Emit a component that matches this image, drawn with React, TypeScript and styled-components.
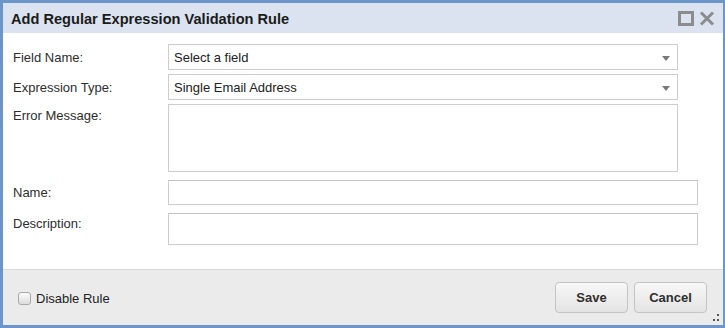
import styled, { createGlobalStyle } from 'styled-components';

const GlobalStyle = createGlobalStyle`
    html, body {
        margin: 0;
        padding: 0;
        background: #ffffff;
    }
    body {
        font-family: Arial, "Liberation Sans", sans-serif;
    }
`;

const Dialog = styled.div`
    width: 725px;
    height: 328px;
    box-sizing: border-box;
    border-style: solid;
    border-color: #6c95c9;
    border-width: 3px 2px 3px 3px;
    display: flex;
    flex-direction: column;
    background: #ffffff;
    position: relative;
`;

const TitleBar = styled.div`
    height: 30px;
    flex: none;
    display: flex;
    align-items: center;
    justify-content: space-between;
    background: #dae3ef;
    padding: 0 8px 0 8px;
`;

const Title = styled.h1`
    margin: 0;
    font-size: 14.6px;
    font-weight: bold;
    color: #1b1b1b;
    padding-top: 1px;
`;

const TitleIcons = styled.div`
    display: flex;
    align-items: center;
    gap: 5px;
    padding-top: 1px;
`;

const Body = styled.div`
    flex: 1;
    display: grid;
    grid-template-columns: 155px 1fr;
    row-gap: 4px;
    align-content: start;
    padding: 11px 0 0 10px;
`;

const Label = styled.label<{ $top?: number; $mt?: number }>`
    font-size: 13px;
    color: #2d2d2d;
    display: flex;
    align-items: ${({ $top }) => ($top !== undefined ? 'flex-start' : 'center')};
    padding-top: ${({ $top }) => $top ?? 0}px;
    margin-top: ${({ $mt }) => $mt ?? 0}px;
`;

const SelectBox = styled.div`
    width: 510px;
    height: 26px;
    box-sizing: border-box;
    border: 1px solid #cdcdcd;
    display: flex;
    align-items: center;
    justify-content: space-between;
    padding: 0 7px 0 5px;
    font-size: 13px;
    color: #222;
    background: #fff;
`;

const Arrow = styled.span`
    width: 0;
    height: 0;
    border-left: 4.5px solid transparent;
    border-right: 4.5px solid transparent;
    border-top: 5px solid #7a7a7a;
    margin-top: 2px;
`;

const TextArea = styled.div`
    width: 510px;
    height: 68px;
    box-sizing: border-box;
    border: 1px solid #cdcdcd;
    margin-bottom: 4px;
`;

const Input = styled.div<{ $h: number; $mt?: number }>`
    width: 530px;
    height: ${({ $h }) => $h}px;
    box-sizing: border-box;
    border: 1px solid #cdcdcd;
    border-top-color: #c2c2c2;
    margin-top: ${({ $mt }) => $mt ?? 0}px;
`;

const Footer = styled.div`
    height: 56px;
    flex: none;
    box-sizing: border-box;
    border-top: 1px solid #d9d9d9;
    background: #ebebeb;
    display: flex;
    align-items: center;
    justify-content: space-between;
    padding: 1px 16px 0 15px;
`;

const CheckRow = styled.label`
    display: flex;
    align-items: center;
    gap: 5px;
    font-size: 13px;
    color: #222;
`;

const CheckBox = styled.span`
    width: 11px;
    height: 11px;
    border: 1px solid #a9a9a9;
    border-radius: 3px;
    background: linear-gradient(#fbfbfb, #dcdcdc);
`;

const Buttons = styled.div`
    display: flex;
    gap: 6px;
    margin-top: -2px;
`;

const Button = styled.button`
    width: 73px;
    height: 31px;
    border: 1px solid #c4c4c4;
    border-radius: 4px;
    background: linear-gradient(#f7f7f7, #e4e4e4);
    font-family: Arial, "Liberation Sans", sans-serif;
    font-size: 13px;
    font-weight: bold;
    color: #2e2e2e;
    padding: 0;
`;

const Grip = styled.svg`
    position: absolute;
    right: 3px;
    bottom: 3px;
`;

const MaxIcon = () => (
    <svg width="16" height="15" viewBox="0 0 16 15">
        <rect x="1.5" y="1.5" width="13" height="12" fill="none" stroke="#8c8c8c" strokeWidth="3" />
    </svg>
);

const CloseIcon = () => (
    <svg width="16" height="15" viewBox="0 0 16 15">
        <path d="M2 1.5 L14 13.5 M14 1.5 L2 13.5" stroke="#8c8c8c" strokeWidth="3" />
    </svg>
);

export default function App() {
    return (
        <>
            <GlobalStyle />
            <Dialog>
                <TitleBar>
                    <Title>Add Regular Expression Validation Rule</Title>
                    <TitleIcons>
                        <MaxIcon />
                        <CloseIcon />
                    </TitleIcons>
                </TitleBar>
                <Body>
                    <Label>Field Name:</Label>
                    <SelectBox>
                        Select a field
                        <Arrow />
                    </SelectBox>
                    <Label>Expression Type:</Label>
                    <SelectBox>
                        Single Email Address
                        <Arrow />
                    </SelectBox>
                    <Label $top={4}>Error Message:</Label>
                    <TextArea />
                    <Label>Name:</Label>
                    <Input $h={25} />
                    <Label $top={3} $mt={4}>Description:</Label>
                    <Input $h={32} $mt={4} />
                </Body>
                <Footer>
                    <CheckRow>
                        <CheckBox />
                        Disable Rule
                    </CheckRow>
                    <Buttons>
                        <Button>Save</Button>
                        <Button>Cancel</Button>
                    </Buttons>
                </Footer>
                <Grip width="8" height="8" viewBox="0 0 8 8">
                    <rect x="5" y="0" width="2" height="2" fill="#555" />
                    <rect x="1" y="5" width="2" height="2" fill="#555" />
                    <rect x="5" y="5" width="2" height="2" fill="#555" />
                </Grip>
            </Dialog>
        </>
    );
}
